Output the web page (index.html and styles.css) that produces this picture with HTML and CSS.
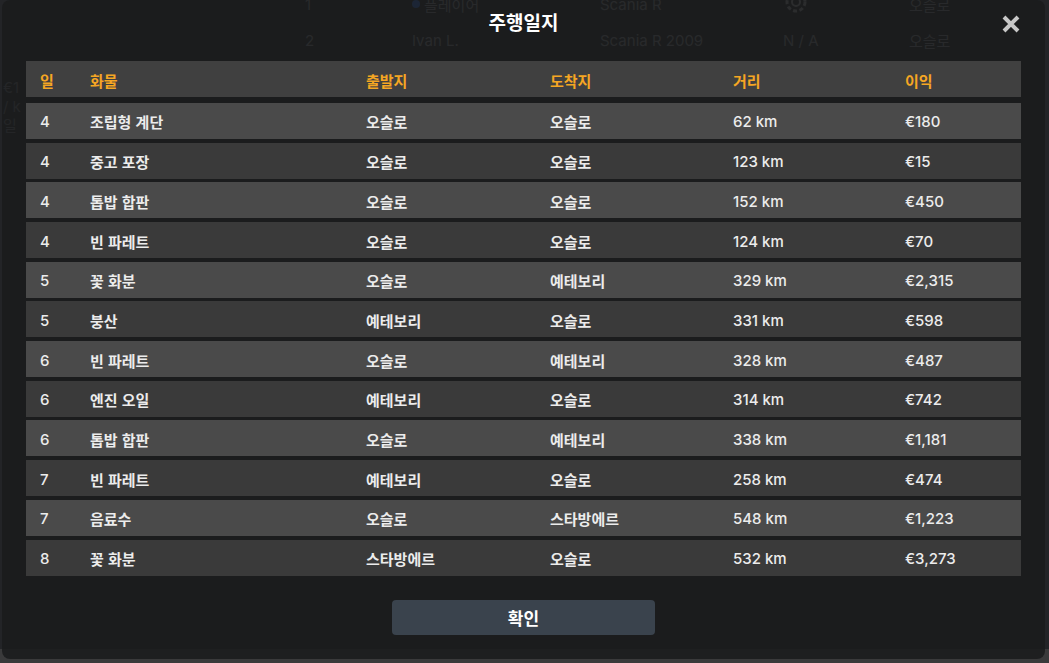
FILE: index.html
```html
<!DOCTYPE html>
<html lang="ko">
<head>
<meta charset="utf-8">
<title>주행일지</title>
<link rel="stylesheet" href="styles.css">
</head>
<body>
<div class="backdrop">
  <div class="bg-row bg-row-top">
    <span class="bg-c1">1</span>
    <span class="bg-c2"><i class="bg-dot"></i>플레이어</span>
    <span class="bg-c3">Scania R</span>
    <span class="bg-c4"><svg width="26" height="26" viewBox="0 0 26 26"><circle cx="13" cy="13" r="9" fill="none" stroke="#a0a0a0" stroke-width="3" stroke-dasharray="4 2.5"/><circle cx="13" cy="13" r="4" fill="none" stroke="#a0a0a0" stroke-width="2"/></svg></span>
    <span class="bg-c5">오슬로</span>
  </div>
  <div class="bg-row">
    <span class="bg-c1">2</span>
    <span class="bg-c2">Ivan L.</span>
    <span class="bg-c3">Scania R 2009</span>
    <span class="bg-c4">N / A</span>
    <span class="bg-c5">오슬로</span>
  </div>
  <div class="bg-side">
    <span>€1</span>
    <span>/ k</span>
    <span>일</span>
  </div>
</div>

<div class="modal">
  <header class="modal-head">
    <h1 class="modal-title">주행일지</h1>
    <button class="close-btn" aria-label="닫기">
      <svg width="20" height="20" viewBox="0 0 20 20"><path d="M3 3 L17 17 M17 3 L3 17" stroke="#c8c8c8" stroke-width="4" stroke-linecap="butt"/></svg>
    </button>
  </header>

  <div class="log">
    <div class="log-row log-head">
      <span>일</span><span>화물</span><span>출발지</span><span>도착지</span><span>거리</span><span>이익</span>
    </div>
    <div class="log-row alt"><span>4</span><span class="ko">조립형 계단</span><span class="ko">오슬로</span><span class="ko">오슬로</span><span>62 km</span><span>€180</span></div>
    <div class="log-row"><span>4</span><span class="ko">중고 포장</span><span class="ko">오슬로</span><span class="ko">오슬로</span><span>123 km</span><span>€15</span></div>
    <div class="log-row alt"><span>4</span><span class="ko">톱밥 합판</span><span class="ko">오슬로</span><span class="ko">오슬로</span><span>152 km</span><span>€450</span></div>
    <div class="log-row"><span>4</span><span class="ko">빈 파레트</span><span class="ko">오슬로</span><span class="ko">오슬로</span><span>124 km</span><span>€70</span></div>
    <div class="log-row alt"><span>5</span><span class="ko">꽃 화분</span><span class="ko">오슬로</span><span class="ko">예테보리</span><span>329 km</span><span>€2,315</span></div>
    <div class="log-row"><span>5</span><span class="ko">붕산</span><span class="ko">예테보리</span><span class="ko">오슬로</span><span>331 km</span><span>€598</span></div>
    <div class="log-row alt"><span>6</span><span class="ko">빈 파레트</span><span class="ko">오슬로</span><span class="ko">예테보리</span><span>328 km</span><span>€487</span></div>
    <div class="log-row"><span>6</span><span class="ko">엔진 오일</span><span class="ko">예테보리</span><span class="ko">오슬로</span><span>314 km</span><span>€742</span></div>
    <div class="log-row alt"><span>6</span><span class="ko">톱밥 합판</span><span class="ko">오슬로</span><span class="ko">예테보리</span><span>338 km</span><span>€1,181</span></div>
    <div class="log-row"><span>7</span><span class="ko">빈 파레트</span><span class="ko">예테보리</span><span class="ko">오슬로</span><span>258 km</span><span>€474</span></div>
    <div class="log-row alt"><span>7</span><span class="ko">음료수</span><span class="ko">오슬로</span><span class="ko">스타방에르</span><span>548 km</span><span>€1,223</span></div>
    <div class="log-row"><span>8</span><span class="ko">꽃 화분</span><span class="ko">스타방에르</span><span class="ko">오슬로</span><span>532 km</span><span>€3,273</span></div>
  </div>

  <footer class="modal-foot">
    <button class="ok-btn">확인</button>
  </footer>
</div>
</body>
</html>
```

FILE: styles.css
```css
* { box-sizing: border-box; }

html, body {
  margin: 0;
  padding: 0;
}

body {
  width: 1049px;
  height: 663px;
  overflow: hidden;
  position: relative;
  background: #3a3a3b;
  font-family: Inter, "Noto Sans CJK KR", sans-serif;
  color: #ececec;
}

/* faint game UI behind the dialog */
.backdrop {
  height: 100%;
  background: #232427;
  font-size: 15px;
  color: #8e8f92;
}

.bg-row {
  display: flex;
  align-items: center;
  height: 36px;
  padding-left: 305px;
}

.bg-row-top {
  margin-top: -14px;
  margin-bottom: 0;
}

.bg-c1 { width: 107px; }
.bg-c2 { width: 188px; display: flex; align-items: center; gap: 4px; }
.bg-c3 { width: 183px; }
.bg-c4 { width: 126px; }
.bg-c5 { width: 80px; }

.bg-dot {
  width: 8px;
  height: 8px;
  border-radius: 50%;
  background: #2f6fe0;
  display: inline-block;
}

.bg-side {
  display: flex;
  flex-direction: column;
  margin-top: 20px;
  margin-left: 3px;
  font-size: 15px;
  line-height: 19px;
  color: #6c6d70;
}

/* dialog */
.modal {
  position: absolute;
  left: 2px;
  top: 0;
  width: 1043px;
  height: 659px;
  border-radius: 8px;
  background: rgba(26, 27, 29, 0.88);
  display: flex;
  flex-direction: column;
}

.modal-head {
  height: 61px;
  display: flex;
  justify-content: center;
  align-items: flex-start;
  position: relative;
}

.modal-title {
  margin: 9px 0 0;
  font-family: "Noto Sans CJK KR", sans-serif;
  font-size: 19px;
  font-weight: 700;
  color: #ffffff;
  line-height: 26px;
}

.close-btn {
  position: absolute;
  right: 24px;
  top: 14px;
  width: 20px;
  height: 20px;
  padding: 0;
  border: 0;
  background: none;
  display: flex;
}

.log {
  margin: 0 24px;
  display: flex;
  flex-direction: column;
  gap: 3.7px;
}

.log-row {
  display: grid;
  grid-template-columns: 50px 276px 184px 183px 172px 1fr;
  align-items: center;
  height: 36px;
  padding: 2px 0 0 14px;
  background: #3a3a3a;
  font-size: 15px;
  font-weight: 500;
  color: #ececec;
}

.log-row.alt {
  background: #4a4a4a;
}

.log-row .ko {
  font-family: "Noto Sans CJK KR", sans-serif;
  font-weight: 700;
}

.log-head {
  background: #404040;
  margin-bottom: 2.3px;
  font-family: "Noto Sans CJK KR", sans-serif;
  font-weight: 700;
  color: #f5a623;
}

.modal-foot {
  display: flex;
  justify-content: center;
  padding-top: 24px;
}

.ok-btn {
  width: 263px;
  height: 35px;
  border: 0;
  border-radius: 4px;
  background: #3a434d;
  color: #ffffff;
  font-family: "Noto Sans CJK KR", sans-serif;
  font-size: 17px;
  font-weight: 700;
  padding: 0;
}
```
